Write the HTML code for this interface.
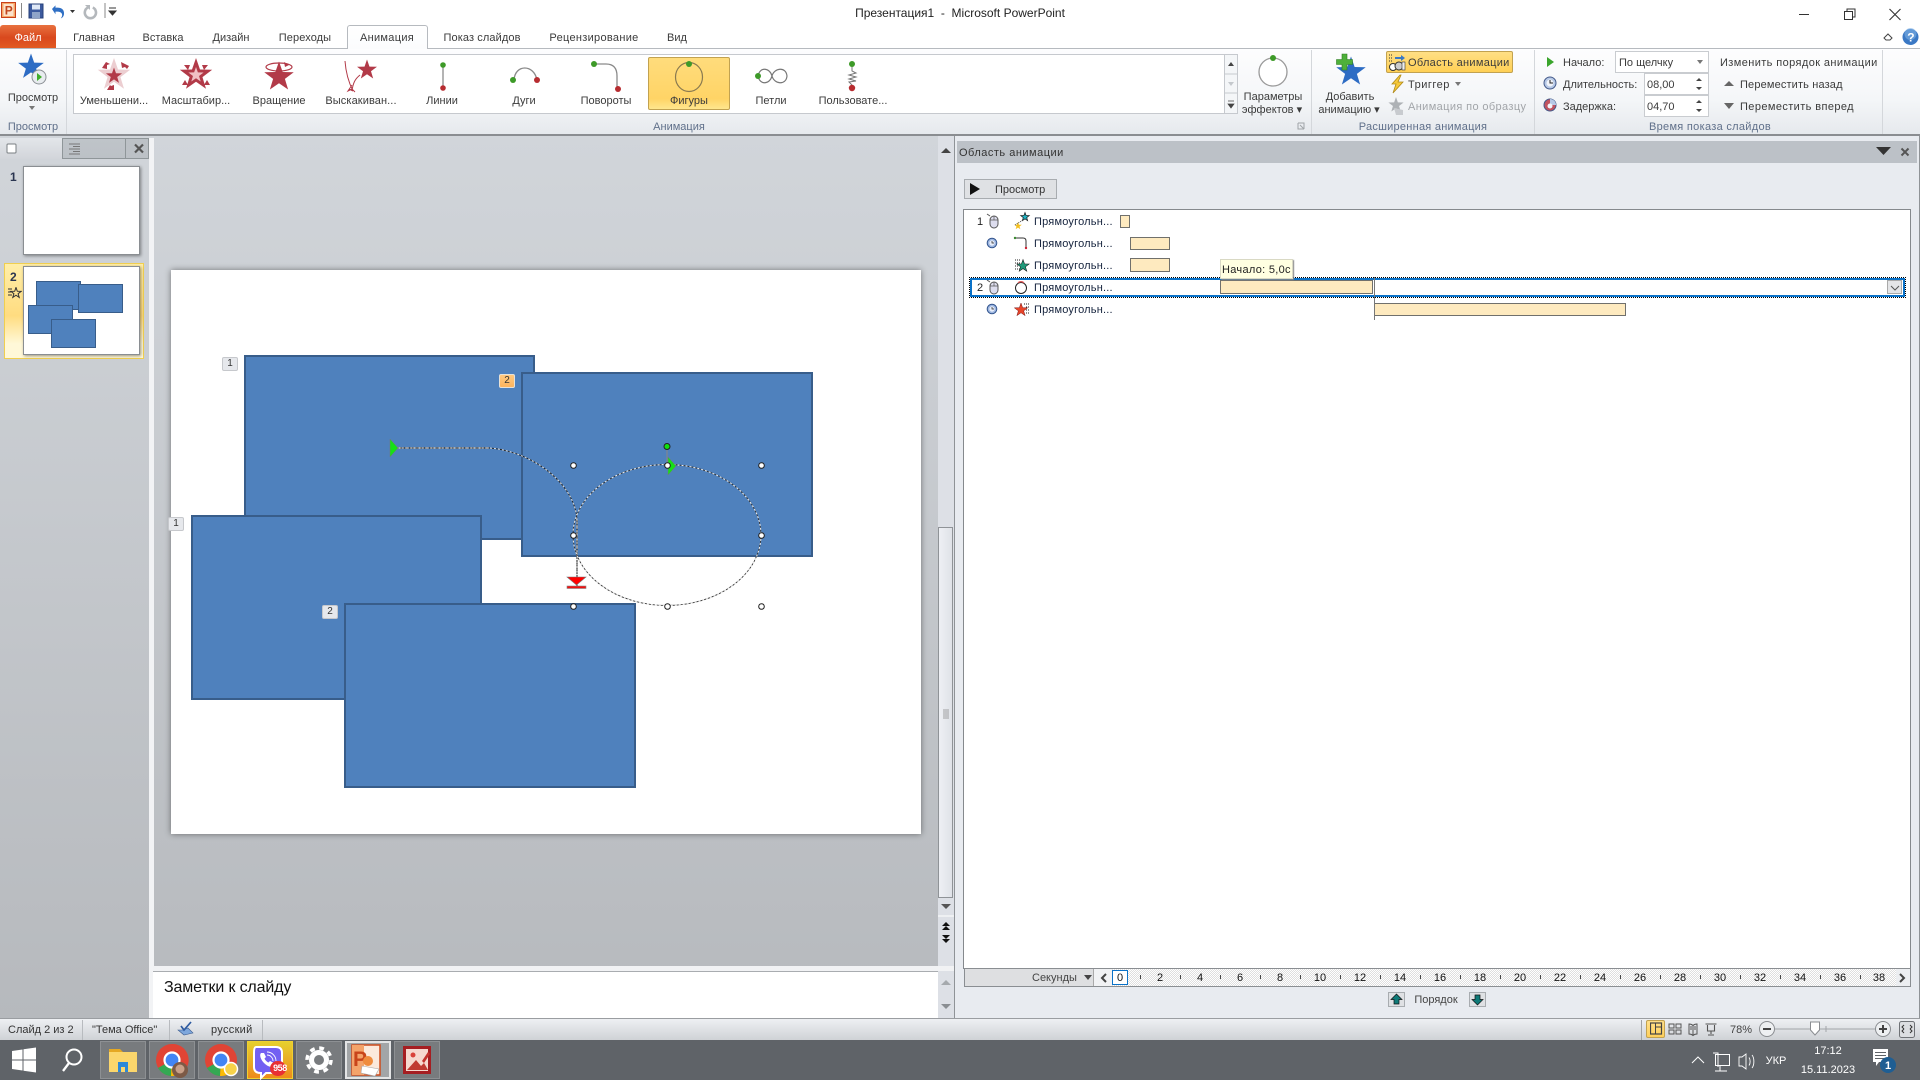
<!DOCTYPE html>
<html lang="ru"><head><meta charset="utf-8"><title>Презентация1 - Microsoft PowerPoint</title>
<style>
html,body{margin:0;padding:0;width:1920px;height:1080px;overflow:hidden;background:#fff}
body{position:relative;font:11px/14px "Liberation Sans","Noto Sans CJK SC",sans-serif;color:#3b3b3b}
div,svg,span.a{position:absolute}
.t{position:absolute;white-space:nowrap;line-height:14px;margin-top:1px}
.c{transform:translateX(-50%)}
.g{color:#60708a}
.tick{position:absolute;width:1px;height:4px;background:#444;top:975px}
.n{position:absolute;top:971px;white-space:nowrap;transform:translateX(-50%);color:#111;font-size:11px}
.rect{position:absolute;background:#4f81bd;border:2px solid #385d8a;box-sizing:border-box}
.bd{position:absolute;width:16px;height:14px;background:#e6e8ec;border:1px solid #c6c8cc;border-radius:2px;box-sizing:border-box;text-align:center;font-size:10px;line-height:12px;color:#333}
.bar{position:absolute;background:#feeabf;border:1px solid #70706c;box-sizing:border-box}
.row{position:absolute;left:1034px;color:#15233d;white-space:nowrap;line-height:14px;margin-top:1px;letter-spacing:.2px}
.tb{position:absolute;top:1041px;height:38px;width:46px;background:#787b7e;border:1px solid #8d9093;box-sizing:border-box}
</style></head><body>

<!-- title bar -->
<div style="left:0;top:0;width:1920px;height:25px;background:#fff"></div>
<svg style="left:0;top:0" width="130" height="24" viewBox="0 0 130 24">
<rect x="1.5" y="2.5" width="14" height="15" fill="#f6a868" stroke="#c8401a"/><rect x="3.5" y="4" width="10" height="12" fill="#fbe3cd"/><text x="4.8" y="14.5" font-family="Liberation Sans" font-size="12" font-weight="bold" fill="#c0461c">P</text>
<path d="M21.5 3V18" stroke="#888"/>
<rect x="29" y="4" width="14" height="14" fill="#3c5a9e" stroke="#27407a"/><rect x="32" y="4.5" width="8" height="5" fill="#dfe8f6"/><rect x="32" y="12" width="8" height="6" fill="#8fa4c8"/>
<path d="M52 9l3.5-3.6v2.3c5.5-.6 9 1.5 8.5 6.5-.3 2.3-1.6 3.5-3.2 4.2 1.3-1.8 1.7-3.3 1.1-4.7-.8-1.7-3.2-2.4-6.4-2v2.5z" fill="#2f6fc4"/>
<path d="M70 10l5 0-2.500 3z" fill="#333"/>
<path d="M88 7.500a5.600 5.600 0 1 0 4.800 0" fill="none" stroke="#b4b8bc" stroke-width="2.600"/><path d="M85 5h5v5z" fill="#b4b8bc"/>
<path d="M105 3V18" stroke="#888"/>
<path d="M109 8h7M109 11h7l-3.500 4z" stroke="#333" fill="#333"/>
</svg>
<div class="t c" style="left:960px;top:5px;font-size:12px;color:#222;white-space:pre">Презентация1  -  Microsoft PowerPoint</div>
<svg style="left:1790px;top:0" width="130" height="26" viewBox="0 0 130 26" fill="none" stroke="#333">
<path d="M9 14.500H19"/><rect x="54.500" y="11.500" width="8" height="8"/><path d="M57 11.500V9h8v8h-2.500"/><path d="M99.500 9l11 11M110.500 9l-11 11" stroke-width="1.100"/>
</svg>

<!-- tabs -->
<div style="left:0;top:25px;width:56px;height:23px;background:linear-gradient(#e8713f,#d9481d 55%,#e25a22);border-radius:3px 3px 0 0"></div>
<div class="t c" style="left:28px;top:30px;color:#fff">Файл</div>
<div style="left:0;top:48px;width:1920px;height:1px;background:#b6babf"></div>
<div style="left:347px;top:25px;width:81px;height:24px;background:linear-gradient(#fff,#fbfcfd);border:1px solid #b6babf;border-bottom:0;box-sizing:border-box;border-radius:3px 3px 0 0"></div>
<div class="t c" style="left:94px;top:30px">Главная</div>
<div class="t c" style="left:163px;top:30px">Вставка</div>
<div class="t c" style="left:231px;top:30px">Дизайн</div>
<div class="t c" style="left:305px;top:30px;letter-spacing:.1px">Переходы</div>
<div class="t c" style="left:387px;top:30px;letter-spacing:.3px">Анимация</div>
<div class="t c" style="left:482px;top:30px;letter-spacing:.1px">Показ слайдов</div>
<div class="t c" style="left:594px;top:30px;letter-spacing:.3px">Рецензирование</div>
<div class="t c" style="left:677px;top:30px">Вид</div>
<svg style="left:1880px;top:25px" width="40" height="24" viewBox="0 0 40 24"><path d="M4 13l4-4 4 4-2 2H6z" fill="none" stroke="#444"/><circle cx="30.500" cy="12" r="8" fill="#3a78c4"/><circle cx="30.500" cy="9" r="6" fill="#7fb0e4" opacity=".6"/><text x="27.300" y="16.500" font-family="Liberation Sans" font-size="12" font-weight="bold" fill="#fff">?</text></svg>

<!-- ribbon -->
<div style="left:0;top:49px;width:1920px;height:85px;background:linear-gradient(#fdfdfe,#f4f6f8 60%,#e6e9ed)"></div>
<div style="left:0;top:134px;width:1920px;height:2px;background:#8a8d91"></div>
<div style="left:66px;top:50px;width:1px;height:84px;background:#d4d7db"></div>
<div style="left:1311px;top:50px;width:1px;height:84px;background:#d4d7db"></div>
<div style="left:1534px;top:50px;width:1px;height:84px;background:#d4d7db"></div>
<div style="left:1882px;top:50px;width:1px;height:84px;background:#d4d7db"></div>

<!-- preview button -->
<svg style="left:14px;top:52px" width="36" height="36" viewBox="0 0 36 36">
<polygon transform="translate(17 15) scale(1.350)" points="0,-10 2.350,-3.240 9.510,-3.090 3.800,1.240 5.880,8.090 0,4 -5.880,8.090 -3.800,1.240 -9.510,-3.090 -2.350,-3.240" fill="#2d6cc4"/>
<circle cx="25" cy="25" r="7" fill="#e8ecef" stroke="#8a8f94"/><path d="M23 21l5 4-5 4z" fill="#3fae2a"/>
</svg>
<div class="t c" style="left:33px;top:90px">Просмотр</div>
<svg style="left:28px;top:105px" width="10" height="6"><path d="M1 1h6L4 5z" fill="#777"/></svg>
<div class="t c g" style="left:33px;top:119px">Просмотр</div>

<!-- gallery -->
<div style="left:73px;top:54px;width:1165px;height:60px;background:#fff;border:1px solid #c6c9ce;box-sizing:border-box"></div>
<div style="left:648px;top:57px;width:82px;height:53px;background:linear-gradient(#ffdc7c,#ffd466 80%,#ffe78e);border:1px solid #c2a250;box-sizing:border-box;border-radius:2px"></div>
<div style="left:1224px;top:55px;width:13px;height:58px;background:#f4f6f8;border-left:1px solid #c6c9ce;box-sizing:border-box"></div>
<svg style="left:1224px;top:55px" width="14" height="58"><path d="M0 19h14M0 38h14" stroke="#c6c9ce"/><path d="M4 11h6L7 7z" fill="#444"/><path d="M4 27h6l-3 4z" fill="#c4c8cc"/><path d="M4 46h6M4 49h6l-3 4z" stroke="#444" fill="#444" stroke-width=".7"/></svg>
<svg style="left:73px;top:54px" width="900" height="46" viewBox="73 54 900 46">
<!-- shrink -->
<g fill="#b23a48"><polygon opacity=".25" transform="translate(114 75) scale(1.700)" points="0,-10 2.350,-3.240 9.510,-3.090 3.800,1.240 5.880,8.090 0,4 -5.880,8.090 -3.800,1.240 -9.510,-3.090 -2.350,-3.240"/><polygon transform="translate(114 76) scale(.85)" points="0,-10 2.350,-3.240 9.510,-3.090 3.800,1.240 5.880,8.090 0,4 -5.880,8.090 -3.800,1.240 -9.510,-3.090 -2.350,-3.240"/><path d="M102 68l4-6 4 2-3 1 0 4zM121 62l8 4-2 3-2-2-3 1zM107 90l3-5 1 1 3-1 0 5zM126 75l-1 1z"/></g>
<!-- scale -->
<g fill="#b23a48"><polygon transform="translate(196 75) scale(1.700)" points="0,-10 2.350,-3.240 9.510,-3.090 3.800,1.240 5.880,8.090 0,4 -5.880,8.090 -3.800,1.240 -9.510,-3.090 -2.350,-3.240"/><polygon fill="#f0c0c4" transform="translate(196 75) scale(.8)" points="0,-10 2.350,-3.240 9.510,-3.090 3.800,1.240 5.880,8.090 0,4 -5.880,8.090 -3.800,1.240 -9.510,-3.090 -2.350,-3.240"/><path d="M184 65h6l-2 5zM208 65h-6l2 5zM182 85h6l-3-5zM210 85h-6l3-5z"/></g>
<!-- spin -->
<polygon fill="#b23a48" transform="translate(279 77) scale(1.550)" points="0,-10 2.350,-3.240 9.510,-3.090 3.800,1.240 5.880,8.090 0,4 -5.880,8.090 -3.800,1.240 -9.510,-3.090 -2.350,-3.240"/>
<ellipse cx="279" cy="67" rx="13" ry="4" fill="none" stroke="#b23a48" stroke-width="1.200"/><path d="M289 65l-5-3 1 5z" fill="#b23a48"/>
<!-- pop -->
<polygon fill="#b23a48" transform="translate(367 70) scale(1.050)" points="0,-10 2.350,-3.240 9.510,-3.090 3.800,1.240 5.880,8.090 0,4 -5.880,8.090 -3.800,1.240 -9.510,-3.090 -2.350,-3.240"/>
<path d="M345 61c1 14 5 24 8 30M352 91c1-8 3-12 8-16M352 85l-4 6 4-2 3 3M353 91l-4-2" fill="none" stroke="#b23a48" stroke-width="1"/>
<!-- lines -->
<path d="M443 65V87" stroke="#9a9a9a" stroke-width="1.500"/><circle cx="443" cy="65" r="2.800" fill="#3d9a28"/><circle cx="443" cy="88" r="2.800" fill="#b72c30"/>
<!-- arc -->
<path d="M514 80C515 64 534 64 537 80" fill="none" stroke="#8a8a8a" stroke-width="1.300"/><circle cx="513" cy="80" r="3" fill="#3d9a28"/><circle cx="537" cy="80" r="3" fill="#b72c30"/>
<!-- turn -->
<path d="M594 64H606Q617 64 617 76V89" fill="none" stroke="#8a8a8a" stroke-width="1.300"/><circle cx="594" cy="64" r="3" fill="#3d9a28"/><circle cx="618" cy="89" r="3" fill="#b72c30"/>
<!-- shapes -->
<ellipse cx="689" cy="77" rx="13.500" ry="14.500" fill="none" stroke="#8a7a50" stroke-width="1.200"/><circle cx="689" cy="64" r="3" fill="#3d9a28"/>
<!-- loops -->
<path d="M758 76C760 66 770 68 772 76C774 84 786 86 787 76C786 66 774 68 772 76C770 84 760 86 758 76Z" fill="none" stroke="#777" stroke-width="1.200"/><circle cx="758" cy="76" r="3" fill="#3d9a28"/>
<!-- custom -->
<path d="M852 66V71l4 2-7 2 7 2-7 2 7 2-7 1 3 3" fill="none" stroke="#777"/><circle cx="852" cy="64" r="3" fill="#3d9a28"/><circle cx="852" cy="88" r="3.200" fill="#b72c30"/>
</svg>
<div class="t c" style="left:114px;top:93px">Уменьшени...</div>
<div class="t c" style="left:196px;top:93px">Масштабир...</div>
<div class="t c" style="left:279px;top:93px">Вращение</div>
<div class="t c" style="left:361px;top:93px;letter-spacing:.1px">Выскакиван...</div>
<div class="t c" style="left:442px;top:93px">Линии</div>
<div class="t c" style="left:524px;top:93px">Дуги</div>
<div class="t c" style="left:606px;top:93px">Повороты</div>
<div class="t c" style="left:689px;top:93px">Фигуры</div>
<div class="t c" style="left:771px;top:93px">Петли</div>
<div class="t c" style="left:853px;top:93px">Пользовате...</div>
<div class="t c g" style="left:679px;top:119px">Анимация</div>

<!-- effect options -->
<svg style="left:1255px;top:52px" width="36" height="36"><circle cx="18" cy="20" r="14" fill="#fff" stroke="#9a9a9a" stroke-width="1.300"/><circle cx="18" cy="6" r="3" fill="#3d9a28"/></svg>
<div class="t c" style="left:1273px;top:89px">Параметры</div>
<div class="t c" style="left:1272px;top:102px">эффектов ▾</div>
<svg style="left:1297px;top:122px" width="9" height="9"><path d="M1 1h6v6M1 1v6h6" fill="none" stroke="#a0a4a8"/><path d="M3 3l4 4" stroke="#a0a4a8"/></svg>
<!-- add animation -->
<svg style="left:1330px;top:52px" width="40" height="36"><polygon transform="translate(21 20) scale(1.550)" points="0,-10 2.350,-3.240 9.510,-3.090 3.800,1.240 5.880,8.090 0,4 -5.880,8.090 -3.800,1.240 -9.510,-3.090 -2.350,-3.240" fill="#2d6cc4"/><path d="M12 2h5v5.500h5.500v5H17V18h-5v-5.500H6.500v-5H12z" fill="#4eb03a" stroke="#2d7a20" stroke-width=".6"/></svg>
<div class="t c" style="left:1350px;top:89px">Добавить</div>
<div class="t c" style="left:1349px;top:102px">анимацию ▾</div>
<div class="t c g" style="left:1423px;top:119px;letter-spacing:.25px">Расширенная анимация</div>
<!-- pane btn -->
<div style="left:1386px;top:51px;width:127px;height:22px;background:linear-gradient(#ffdf85,#ffd055);border:1px solid #c2a250;border-radius:2px;box-sizing:border-box"></div>
<svg style="left:1388px;top:52px" width="20" height="20"><path d="M1 3h4M1 6h4M1 9h4" stroke="#333" stroke-dasharray="1 1"/><path d="M7 5h6l0-2 4 3-4 3V7H7z" fill="#3a78c4"/><circle cx="5" cy="15" r="3.500" fill="#fff" stroke="#333"/><circle cx="11" cy="14" r="4" fill="#ccc" stroke="#333"/><rect x="14" y="10" width="3" height="8" fill="#eee" stroke="#333" stroke-width=".6"/></svg>
<div class="t" style="left:1408px;top:55px;letter-spacing:.3px">Область анимации</div>
<svg style="left:1388px;top:74px" width="20" height="20"><path d="M12 1L4 10h4L5 19l10-11h-5l3-7z" fill="#f6c93a" stroke="#b08a1a" stroke-width=".8"/></svg>
<div class="t" style="left:1408px;top:77px;letter-spacing:.5px">Триггер</div>
<svg style="left:1454px;top:81px" width="8" height="6"><path d="M1 1h6L4 5z" fill="#777"/></svg>
<svg style="left:1388px;top:96px" width="20" height="20"><polygon transform="translate(8 9) scale(.8)" points="0,-10 2.350,-3.240 9.510,-3.090 3.800,1.240 5.880,8.090 0,4 -5.880,8.090 -3.800,1.240 -9.510,-3.090 -2.350,-3.240" fill="#aeb2b6"/><path d="M6 12l9 2v5H8z" fill="#c8cbcf"/></svg>
<div class="t" style="left:1408px;top:99px;color:#a2a5a9;letter-spacing:.38px">Анимация по образцу</div>

<!-- timing -->
<svg style="left:1544px;top:54px" width="14" height="16"><path d="M3 3l7 5-7 5z" fill="#3aa52c"/></svg>
<div class="t" style="left:1563px;top:55px">Начало:</div>
<div style="left:1615px;top:51px;width:94px;height:22px;background:#fff;border:1px solid #c9ccd0;box-sizing:border-box"></div>
<div class="t" style="left:1619px;top:55px">По щелчку</div>
<svg style="left:1696px;top:59px" width="9" height="6"><path d="M1 1h6L4 5z" fill="#777"/></svg>
<svg style="left:1543px;top:76px" width="14" height="14"><circle cx="7" cy="7" r="6" fill="#b7c9e6" stroke="#445a8a"/><circle cx="7" cy="7" r="3.500" fill="#f1f4fa"/><path d="M7 4v3h3" stroke="#222" fill="none"/></svg>
<div class="t" style="left:1563px;top:77px">Длительность:</div>
<div style="left:1644px;top:73px;width:65px;height:22px;background:#fff;border:1px solid #c9ccd0;box-sizing:border-box"></div>
<div class="t" style="left:1647px;top:77px">08,00</div>
<svg style="left:1694px;top:77px" width="10" height="14"><path d="M2 4h6L5 1zM2 10h6l-3 3z" fill="#444"/></svg>
<svg style="left:1543px;top:98px" width="14" height="14"><circle cx="7" cy="7" r="6" fill="#c25460" stroke="#445a8a"/><path d="M7 7V1a6 6 0 0 1 6 6z" fill="#b7c9e6"/><circle cx="7" cy="8" r="2.500" fill="#f1f4fa"/></svg>
<div class="t" style="left:1563px;top:99px">Задержка:</div>
<div style="left:1644px;top:95px;width:65px;height:22px;background:#fff;border:1px solid #c9ccd0;box-sizing:border-box"></div>
<div class="t" style="left:1647px;top:99px">04,70</div>
<svg style="left:1694px;top:99px" width="10" height="14"><path d="M2 4h6L5 1zM2 10h6l-3 3z" fill="#444"/></svg>
<div class="t" style="left:1720px;top:55px;letter-spacing:.4px">Изменить порядок анимации</div>
<svg style="left:1722px;top:78px" width="14" height="12"><path d="M2 8h10L7 3z" fill="#666"/></svg>
<div class="t" style="left:1740px;top:77px;letter-spacing:.15px">Переместить назад</div>
<svg style="left:1722px;top:100px" width="14" height="12"><path d="M2 3h10L7 9z" fill="#666"/></svg>
<div class="t" style="left:1740px;top:99px;letter-spacing:.4px">Переместить вперед</div>
<div class="t c g" style="left:1710px;top:119px;letter-spacing:.3px">Время показа слайдов</div>

<!-- main background -->
<div style="left:0;top:136px;width:1920px;height:882px;background:linear-gradient(#d1d5da,#b6b9bd)"></div>

<!-- left pane -->
<div style="left:0;top:138px;width:62px;height:21px;background:linear-gradient(#e3e6ea,#d2d5da)"></div>
<div style="left:62px;top:138px;width:64px;height:21px;background:linear-gradient(#bfc4c9,#bcc1c6);border:1px solid #8f9699;box-sizing:border-box"></div>
<div style="left:125px;top:138px;width:24px;height:21px;background:#bcc1c6;border:1px solid #8f9699;box-sizing:border-box"></div>
<svg style="left:4px;top:143px" width="150" height="14"><rect x="3" y="1" width="9" height="9" fill="#fff" stroke="#7a7f83" rx="1"/><path d="M65 1h11M69 3.500h7M65 6h11M69 8.500h7M65 11h11" stroke="#777"/><path d="M131 1.500l8 8M139 1.500l-8 8" stroke="#555" stroke-width="2.200"/></svg>
<div style="left:149px;top:138px;width:5px;height:880px;background:#f2f3f5"></div>
<div class="t" style="left:10px;top:169px;font-size:12px;font-weight:bold;color:#2a3550">1</div>
<div style="left:23px;top:166px;width:117px;height:89px;background:#fff;border:1px solid #8a8e92;box-sizing:border-box;box-shadow:1px 1px 3px rgba(0,0,0,.4)"></div>
<div style="left:4px;top:263px;width:140px;height:96px;border:1px solid #f0cf50;box-sizing:border-box;background:linear-gradient(#ffeea8,#ffdc80 55%,#fff8d8 85%)"></div>
<div class="t" style="left:10px;top:269px;font-size:12px;font-weight:bold;color:#2a3550">2</div>
<svg style="left:8px;top:287px" width="14" height="12"><path d="M0 2h4M0 5h3M0 8h4" stroke="#333"/><polygon transform="translate(8 6) scale(.55)" points="0,-10 2.350,-3.240 9.510,-3.090 3.800,1.240 5.880,8.090 0,4 -5.880,8.090 -3.800,1.240 -9.510,-3.090 -2.350,-3.240" fill="none" stroke="#333" stroke-width="1.800"/></svg>
<div style="left:23px;top:266px;width:117px;height:89px;background:#fff;border:1px solid #8a8e92;box-sizing:border-box;box-shadow:1px 1px 3px rgba(0,0,0,.4)"></div>
<div class="rect" style="left:36px;top:281px;width:45px;height:29px;border-width:1px"></div>
<div class="rect" style="left:78px;top:284px;width:45px;height:29px;border-width:1px"></div>
<div class="rect" style="left:28px;top:305px;width:45px;height:29px;border-width:1px"></div>
<div class="rect" style="left:51px;top:319px;width:45px;height:29px;border-width:1px"></div>

<!-- slide -->
<div style="left:171px;top:270px;width:750px;height:564px;background:#fff;box-shadow:0 0 6px rgba(0,0,0,.45)"></div>
<div class="rect" style="left:244px;top:355px;width:291px;height:185px"></div>
<div class="rect" style="left:191px;top:515px;width:291px;height:185px"></div>
<div class="rect" style="left:521px;top:372px;width:292px;height:185px"></div>
<div class="rect" style="left:344px;top:603px;width:292px;height:185px"></div>
<div class="bd" style="left:222px;top:357px">1</div>
<div class="bd" style="left:499px;top:374px;background:linear-gradient(#ffc980,#fdb45e);border-color:#e7e2d8">2</div>
<div class="bd" style="left:168px;top:517px">1</div>
<div class="bd" style="left:322px;top:605px">2</div>
<svg style="left:380px;top:360px" width="460" height="270" viewBox="380 360 460 270">
<path d="M390 448H490C535 452 577 486 577 522V587" fill="none" stroke="#222" stroke-width=".9"/>
<path d="M390 448H490C535 452 577 486 577 522V587" fill="none" stroke="#ddd" stroke-width="1" stroke-dasharray="2 2"/>
<path d="M390 448H490M577 520V586" stroke="#8a8a8a" stroke-width="2" stroke-dasharray="1.500 1" fill="none"/>
<ellipse cx="667" cy="535" rx="94" ry="70.500" fill="none" stroke="#333" stroke-width=".9"/>
<ellipse cx="667" cy="535" rx="94" ry="70.500" fill="none" stroke="#eee" stroke-dasharray="2 2"/>
<path d="M390 439l8 9-8 9z" fill="#16e016" stroke="#777" stroke-width=".5"/>
<path d="M567 577h19l-9.500 8z" fill="#f00" stroke="#777" stroke-width=".6"/><rect x="567" y="586" width="19" height="2.500" fill="#e11" stroke="#888" stroke-width=".6"/>
<path d="M667 447V465" stroke="#888"/>
<path d="M668 457l8 9-8 9z" fill="#16e016" stroke="#777" stroke-width=".5"/>
<circle cx="667" cy="446.500" r="3" fill="#10e010" stroke="#222"/>
<g fill="#fff" stroke="#222"><circle cx="573.500" cy="465.500" r="2.800"/><circle cx="667.500" cy="465.500" r="2.800"/><circle cx="761.500" cy="465.500" r="2.800"/><circle cx="573.500" cy="535.500" r="2.800"/><circle cx="761.500" cy="535.500" r="2.800"/><circle cx="573.500" cy="606.500" r="2.800"/><circle cx="667.500" cy="606.500" r="2.800"/><circle cx="761.500" cy="606.500" r="2.800"/></g>
</svg>

<!-- editor scrollbar -->
<div style="left:938px;top:136px;width:16px;height:830px;background:#dde0e6"></div>
<div style="left:938px;top:527px;width:15px;height:371px;background:linear-gradient(90deg,#eef0f4,#dfe2e8);border:1px solid #8f9397;box-sizing:border-box"></div>
<svg style="left:938px;top:140px" width="16" height="820"><path d="M3 13h10L8 8z" fill="#444"/><path d="M5 570h6M5 572h6M5 574h6M5 576h6M5 578h6" stroke="#888" stroke-width=".8"/><path d="M3 764h10l-5 5z" fill="#555"/><path d="M0 776h16" stroke="#fff"/><path d="M4 786h8l-4-4zM4 790h8l-4-4zM4 799h8l-4 4zM4 795h8l-4 4z" fill="#111"/></svg>

<!-- notes -->
<div style="left:153px;top:966px;width:801px;height:5px;background:#f1f2f4"></div>
<div style="left:153px;top:971px;width:785px;height:47px;background:#fff;border-top:1px solid #a9acb0;box-sizing:border-box"></div>
<div class="t" style="left:164px;top:978px;font-size:16px;line-height:18px;color:#111;letter-spacing:-.15px">Заметки к слайду</div>
<div style="left:938px;top:971px;width:16px;height:47px;background:#dde0e6"></div>
<svg style="left:938px;top:971px" width="16" height="47"><path d="M3 14h10L8 9z" fill="#a5a9ad"/><path d="M3 33h10l-5 5z" fill="#8a8e92"/></svg>

<!-- right pane -->
<div style="left:954px;top:136px;width:966px;height:882px;background:#e8ebf0;border-left:1px solid #8f9397;border-right:1px solid #8f9397;box-sizing:border-box"></div>
<div style="left:957px;top:141px;width:960px;height:22px;background:#bcc1c7"></div>
<div class="t" style="left:959px;top:145px;color:#333;letter-spacing:.5px">Область анимации</div>
<svg style="left:1872px;top:143px" width="46" height="18"><path d="M4 4h15l-7.500 8z" fill="#333"/><path d="M29.500 5.500l7 7M36.500 5.500l-7 7" stroke="#555" stroke-width="2"/></svg>
<div style="left:964px;top:179px;width:93px;height:20px;background:#dfe1e4;border:1px solid #a8acb0;box-sizing:border-box"></div>
<svg style="left:968px;top:182px" width="14" height="14"><path d="M2 1l10 6-10 6z" fill="#111"/></svg>
<div class="t" style="left:995px;top:182px;color:#333">Просмотр</div>

<div style="left:963px;top:209px;width:948px;height:760px;background:#fff;border:1px solid #85898d;box-sizing:border-box"></div>

<!-- rows -->
<div class="t" style="left:977px;top:214px;color:#222">1</div>
<div class="t" style="left:977px;top:280px;color:#222">2</div>
<div class="row" style="top:214px">Прямоугольн...</div>
<div class="row" style="top:236px">Прямоугольн...</div>
<div class="row" style="top:258px">Прямоугольн...</div>
<div class="row" style="top:280px">Прямоугольн...</div>
<div class="row" style="top:302px">Прямоугольн...</div>
<div class="bar" style="left:1120px;top:215px;width:10px;height:13px"></div>
<div class="bar" style="left:1130px;top:237px;width:40px;height:13px"></div>
<div class="bar" style="left:1130px;top:258px;width:40px;height:14px"></div>
<div style="left:969px;top:277px;width:937px;height:21px;border:1px dotted #000;box-sizing:border-box"></div>
<div style="left:970px;top:278px;width:935px;height:19px;border:2px solid #0a72c8;box-sizing:border-box"></div>
<div class="bar" style="left:1220px;top:280px;width:153px;height:14px"></div>
<div class="bar" style="left:1374px;top:303px;width:252px;height:13px"></div>
<div style="left:1374px;top:277px;width:1px;height:43px;background:#777"></div>
<div style="left:1220px;top:259px;width:73px;height:20px;background:#ffffe1;border:1px solid #d9d9c4;box-shadow:1px 1px 1px #888;box-sizing:border-box"></div>
<div class="t" style="left:1222px;top:262px;color:#222;letter-spacing:.3px">Начало: 5,0с</div>
<div style="left:1887px;top:280px;width:15px;height:14px;background:#e4e5e7;border:1px solid #aaa;box-sizing:border-box"></div>
<svg style="left:1890px;top:284px" width="10" height="8"><path d="M1 2l4 4 4-4" fill="none" stroke="#555"/></svg>
<!-- row icons -->
<svg style="left:975px;top:210px" width="60" height="110" viewBox="975 210 60 110">
<g><path d="M987 214l3 2" stroke="#555"/><rect x="990" y="216" width="8" height="12" rx="4" fill="#dde" stroke="#555"/><path d="M990 220h8M994 216v4" stroke="#555" stroke-width=".7"/></g>
<g transform="translate(0 66)"><path d="M987 214l3 2" stroke="#555"/><rect x="990" y="216" width="8" height="12" rx="4" fill="#dde" stroke="#555"/><path d="M990 220h8M994 216v4" stroke="#555" stroke-width=".7"/></g>
<circle cx="992" cy="243" r="4.800" fill="#9db6e0" stroke="#34568f"/><circle cx="992" cy="243" r="2.700" fill="#e8eefa"/><path d="M992 241v2h2" stroke="#222" fill="none" stroke-width=".7"/>
<circle cx="992" cy="309" r="4.800" fill="#9db6e0" stroke="#34568f"/><circle cx="992" cy="309" r="2.700" fill="#e8eefa"/><path d="M992 307v2h2" stroke="#222" fill="none" stroke-width=".7"/>
<polygon transform="translate(1025 217) scale(.45)" points="0,-10 2.350,-3.240 9.510,-3.090 3.800,1.240 5.880,8.090 0,4 -5.880,8.090 -3.800,1.240 -9.510,-3.090 -2.350,-3.240" fill="#22b8c8" stroke="#111" stroke-width="1.500"/>
<polygon transform="translate(1018 226) scale(.4)" points="0,-10 2.350,-3.240 9.510,-3.090 3.800,1.240 5.880,8.090 0,4 -5.880,8.090 -3.800,1.240 -9.510,-3.090 -2.350,-3.240" fill="#f4c020"/>
<path d="M1015 225l8-5" stroke="#555" stroke-dasharray="1 1"/>
<path d="M1015 238h8q3 0 3 3v8" fill="none" stroke="#333"/><circle cx="1015" cy="238" r="1.200" fill="#3a8a30"/><circle cx="1026" cy="248" r="1.200" fill="#c23"/>
<polygon transform="translate(1023 266) scale(.65)" points="0,-10 2.350,-3.240 9.510,-3.090 3.800,1.240 5.880,8.090 0,4 -5.880,8.090 -3.800,1.240 -9.510,-3.090 -2.350,-3.240" fill="#1f9a7a" stroke="#111" stroke-width=".8"/>
<path d="M1015 260h5M1015 263h5M1015 266h4M1015 269h5" stroke="#222" stroke-dasharray="1 1"/>
<circle cx="1021" cy="288" r="5.500" fill="#fff" stroke="#222" stroke-width="1"/><path d="M1018 283a4 4 0 0 1 6 0" stroke="#d55" fill="none" stroke-width="1.200"/>
<polygon transform="translate(1021 310) scale(.7)" points="0,-10 2.350,-3.240 9.510,-3.090 3.800,1.240 5.880,8.090 0,4 -5.880,8.090 -3.800,1.240 -9.510,-3.090 -2.350,-3.240" fill="#e8452a" stroke="#711" stroke-width=".7"/>
<path d="M1024 304h5M1026 307h3M1026 310h3M1026 313h3" stroke="#222" stroke-dasharray="1 1"/>
</svg>

<!-- timeline -->
<div style="left:964px;top:968px;width:947px;height:19px;background:#fff repeating-conic-gradient(#dfdfdf 0 25%,#fff 0 50%) 0 0/2px 2px;border:1px solid #8a8e92;box-sizing:border-box"></div>
<div style="left:965px;top:969px;width:129px;height:17px;background:#dedfe1;border-right:1px solid #aaa;box-sizing:border-box"></div>
<div style="left:1094px;top:969px;width:18px;height:17px;background:#f1f2f4"></div>
<div style="left:1896px;top:969px;width:14px;height:17px;background:#eceef1"></div>
<div class="t" style="left:1032px;top:970px;color:#444">Секунды</div>
<svg style="left:1080px;top:971px" width="40" height="14"><path d="M4 4h8l-4 5z" fill="#444"/><path d="M26 3l-4 4 4 4" fill="none" stroke="#444" stroke-width="2"/></svg>
<svg style="left:1898px;top:971px" width="10" height="14"><path d="M2 3l4 4-4 4" fill="none" stroke="#444" stroke-width="2"/></svg>
<div style="left:1112px;top:970px;width:16px;height:15px;background:#fff;border:1px solid #0a72c8;box-sizing:border-box"></div>
<div class="n" style="left:1120px">0</div><div class="n" style="left:1160px">2</div><div class="n" style="left:1200px">4</div><div class="n" style="left:1240px">6</div><div class="n" style="left:1280px">8</div><div class="n" style="left:1320px">10</div><div class="n" style="left:1360px">12</div><div class="n" style="left:1400px">14</div><div class="n" style="left:1440px">16</div><div class="n" style="left:1480px">18</div><div class="n" style="left:1520px">20</div><div class="n" style="left:1560px">22</div><div class="n" style="left:1600px">24</div><div class="n" style="left:1640px">26</div><div class="n" style="left:1680px">28</div><div class="n" style="left:1720px">30</div><div class="n" style="left:1760px">32</div><div class="n" style="left:1800px">34</div><div class="n" style="left:1840px">36</div><div class="n" style="left:1879px">38</div>
<div class="tick" style="left:1140px"></div><div class="tick" style="left:1180px"></div><div class="tick" style="left:1220px"></div><div class="tick" style="left:1260px"></div><div class="tick" style="left:1300px"></div><div class="tick" style="left:1340px"></div><div class="tick" style="left:1380px"></div><div class="tick" style="left:1420px"></div><div class="tick" style="left:1460px"></div><div class="tick" style="left:1500px"></div><div class="tick" style="left:1540px"></div><div class="tick" style="left:1580px"></div><div class="tick" style="left:1620px"></div><div class="tick" style="left:1660px"></div><div class="tick" style="left:1700px"></div><div class="tick" style="left:1740px"></div><div class="tick" style="left:1780px"></div><div class="tick" style="left:1820px"></div><div class="tick" style="left:1860px"></div>
<div style="left:1388px;top:992px;width:17px;height:15px;background:#dfe1e4;border:1px solid #a8acb0;box-sizing:border-box"></div>
<div style="left:1469px;top:992px;width:17px;height:15px;background:#dfe1e4;border:1px solid #a8acb0;box-sizing:border-box"></div>
<svg style="left:1388px;top:992px" width="98" height="15"><path d="M8.500 2l5.500 5.500h-3V12H6V7.500H3z" fill="#0f7a78" stroke="#111" stroke-width=".7"/><path d="M89.500 13l5.500-5.500h-3V3h-5v4.500h-3z" fill="#0f7a78" stroke="#111" stroke-width=".7"/></svg>
<div class="t c" style="left:1436px;top:992px;color:#444">Порядок</div>

<!-- status bar -->
<div style="left:0;top:1018px;width:1920px;height:22px;background:linear-gradient(#eef0f3,#cfd2d6);border-top:1px solid #9a9da1;box-sizing:border-box"></div>
<div class="t" style="left:8px;top:1022px;color:#333">Слайд 2 из 2</div>
<div style="left:82px;top:1020px;width:1px;height:20px;background:#b8bbbf"></div>
<div class="t" style="left:92px;top:1022px;color:#333">"Тема Office"</div>
<div style="left:169px;top:1020px;width:1px;height:20px;background:#b8bbbf"></div>
<svg style="left:177px;top:1020px" width="18" height="18"><path d="M1 10l6 5 9-2-5-5-5 2z" fill="#7ea7dc" stroke="#3c5c90" stroke-width=".6"/><path d="M4 6l3 4 7-8" fill="none" stroke="#2d5aa0" stroke-width="1.700"/></svg>
<div class="t" style="left:211px;top:1022px;color:#333;letter-spacing:.3px">русский</div>
<div style="left:262px;top:1020px;width:1px;height:20px;background:#b8bbbf"></div>
<div style="left:1641px;top:1020px;width:1px;height:20px;background:#a0a3a7"></div>
<div style="left:1646px;top:1020px;width:19px;height:18px;background:linear-gradient(#ffe08a,#ffd05a);border:1px solid #c2a250;border-radius:2px;box-sizing:border-box"></div>
<svg style="left:1650px;top:1022px" width="130" height="16"><rect x="0.500" y="1" width="11" height="11" fill="none" stroke="#444" stroke-width="1.200"/><path d="M5.500 1v11M5.500 5h6" stroke="#444"/><path d="M19 2h5v4h-5zM26 2h5v4h-5zM19 8h5v4h-5zM26 8h5v4h-5z" fill="none" stroke="#555"/><path d="M39 2c2 0 3 .5 4 1.500 1-1 2-1.500 4-1.500v10c-2 0-3 .5-4 1.500-1-1-2-1.500-4-1.500zM43 3.500v10M40 5h2M40 7h2M44 5h2M44 7h2" fill="none" stroke="#555"/><path d="M55.500 2h11M57.500 3v6h7V3M61 9v3M58 13h6" fill="none" stroke="#555" stroke-width="1.100"/></svg>
<div class="t" style="left:1730px;top:1022px;color:#444">78%</div>
<svg style="left:1755px;top:1019px" width="165" height="21"><circle cx="12" cy="10" r="7.500" fill="#eef0f2" stroke="#8a8d91"/><path d="M8 10h8" stroke="#444" stroke-width="2"/><path d="M20 10h101" stroke="#a2a5a9"/><path d="M71 7v6" stroke="#a2a5a9"/><path d="M55.500 3h9v8l-4.500 5-4.500-5z" fill="#fff" stroke="#8a8d91"/><circle cx="128" cy="10" r="7.500" fill="#eef0f2" stroke="#8a8d91"/><path d="M124 10h8M128 6v8" stroke="#444" stroke-width="2"/><rect x="144.500" y="2.500" width="15" height="16" rx="2" fill="#dcdee1" stroke="#6f7276"/><path d="M149 6l-2 2 2 2M155 6l2 2-2 2M149 14l-2-2 2-2M155 14l2-2-2-2" fill="none" stroke="#333"/></svg>

<!-- taskbar -->
<div style="left:0;top:1040px;width:1920px;height:40px;background:#5f6368"></div>
<svg style="left:0;top:1040px" width="100" height="40"><path d="M12 11l10.500-1.500v10H12zM23.500 9.300L36 7.500v12H23.500zM12 20.500h10.500v10L12 29zM23.500 20.500H36v12l-12.500-1.800z" fill="#fff"/><circle cx="74" cy="17" r="7.500" fill="none" stroke="#fff" stroke-width="2"/><path d="M69 23l-6 8" stroke="#fff" stroke-width="2.300"/></svg>
<div class="tb" style="left:100px"></div><div class="tb" style="left:149px"></div><div class="tb" style="left:198px"></div>
<div class="tb" style="left:247px;background:linear-gradient(#e6d02e,#ed8a1c);border-color:#f0d030"></div>
<div class="tb" style="left:296px"></div>
<div class="tb" style="left:345px;background:#a2a5a7;border-color:#e3e4e5;border-width:2px"></div>
<div class="tb" style="left:394px"></div>
<svg style="left:100px;top:1040px" width="340" height="40" viewBox="100 1040 340 40">
<!-- folder -->
<path d="M109 9h11l3 3h14v6h-28z" transform="translate(0 1040)" fill="#e5a823"/><rect x="109" y="1052" width="28" height="20" fill="#fbd66c"/><rect x="118" y="1062" width="10" height="10" fill="#2b88d8"/><rect x="121" y="1067" width="4" height="5" fill="#fbd66c"/>
<!-- chrome 1 -->
<g><circle cx="172" cy="1060" r="16" fill="#e04435"/><path d="M172 1060l-14 8a16 16 0 0 0 13 8z" fill="#34a853"/><path d="M172 1044a16 16 0 0 1 14.500 24l-14-8z" fill="#e04435"/><path d="M172 1060l14 8a16 16 0 0 1-15 8z" fill="#fbbc05"/><circle cx="172" cy="1060" r="7.500" fill="#4285f4" stroke="#fff" stroke-width="2.200"/><rect x="172" y="1062" width="16" height="16" rx="8" fill="#7c5a46"/><circle cx="180" cy="1069" r="4.500" fill="#c8a088"/></g>
<!-- chrome 2 -->
<g><circle cx="221" cy="1060" r="16" fill="#e04435"/><path d="M221 1060l-14 8a16 16 0 0 0 13 8z" fill="#34a853"/><path d="M221 1060l14 8a16 16 0 0 1-15 8z" fill="#fbbc05"/><circle cx="221" cy="1060" r="7.500" fill="#4285f4" stroke="#fff" stroke-width="2.200"/><circle cx="231" cy="1069" r="6.500" fill="#f6d24a" stroke="#fff" stroke-width="1.500"/></g>
<!-- viber -->
<path d="M256 1047h20q6 0 6 6v14q0 6-6 6h-10l-5 5v-5q-7 0-7-6v-14q0-6 2-6z" fill="#7360f2" stroke="#fff" stroke-width="2"/><path d="M261 1053c-2 2 0 7 3 10 3 3 7 5 9 3l1-3-4-2-1.500 1.500c-1.500-.5-3.500-2.500-4-4l1.500-1.500-2-4z" fill="#fff"/><path d="M267 1052a9 9 0 0 1 9 9M267 1055a6 6 0 0 1 6 6" fill="none" stroke="#fff" stroke-width=".9"/><rect x="270" y="1061" width="16" height="15" rx="7.500" fill="#e82f34"/>
<!-- gear -->
<circle cx="319" cy="1060" r="7.500" fill="none" stroke="#fff" stroke-width="5"/><circle cx="319" cy="1060" r="12" fill="none" stroke="#fff" stroke-width="3.500" stroke-dasharray="4.800 4.600"/>
<!-- powerpoint -->
<rect x="352" y="1045" width="28" height="30" fill="#fbe9dc" stroke="#cc4b1c" stroke-width="1.500"/><rect x="352" y="1045" width="12" height="30" fill="#f4a36a"/><text x="353" y="1066" font-family="Liberation Sans" font-size="21" font-weight="bold" fill="#c8441a">P</text><circle cx="368" cy="1061" r="5" fill="#ef8c3e"/><path d="M362 1066l17 3-4 7-14-3z" fill="#fff" stroke="#aaa" stroke-width=".6"/>
<!-- pptview -->
<rect x="403" y="1046" width="28" height="28" fill="#a51e22"/><rect x="406" y="1049" width="22" height="22" fill="#f6d8cf"/><path d="M407 1070l9-10 5 6 3-3 4 7z" fill="#c03a32"/><circle cx="413" cy="1055" r="2.500" fill="#d9423a"/><path d="M422 1061l6-9 2 2-6 9z" fill="#c3322c"/>
</svg>
<div class="t" style="left:272px;top:1061px;font-size:9px;line-height:12px;color:#fff;font-weight:bold;width:16px;text-align:center;letter-spacing:-.4px">958</div>
<svg style="left:1688px;top:1048px" width="220" height="30" fill="none" stroke="#fff"><path d="M4 15l6-6 6 6"/><rect x="27.500" y="6.500" width="14" height="11"/><path d="M25 5h5v14M32 17.500V23M27 23h12"/><path d="M51 9h3l4-3v15l-4-3h-3zM61 9.500c1.500 2 1.500 6 0 8M64 7c2.500 3 2.500 10 0 13" stroke-width=".9"/></svg>
<div class="t c" style="left:1776px;top:1053px;color:#fff;font-size:11px">УКР</div>
<div class="t c" style="left:1828px;top:1043px;color:#fff;font-size:11px">17:12</div>
<div class="t c" style="left:1828px;top:1062px;color:#fff;font-size:11px">15.11.2023</div>
<svg style="left:1870px;top:1046px" width="36" height="30"><path d="M3 3h15v13h-9l-3 4v-4H3z" fill="#fff"/><path d="M5 6.500h11M5 9.500h11M5 12.500h11" stroke="#5f6368"/><circle cx="18" cy="19" r="8" fill="#1f5e93"/></svg>
<div class="t c" style="left:1888px;top:1058px;color:#fff;font-size:11px;font-weight:bold">1</div>
</body></html>
